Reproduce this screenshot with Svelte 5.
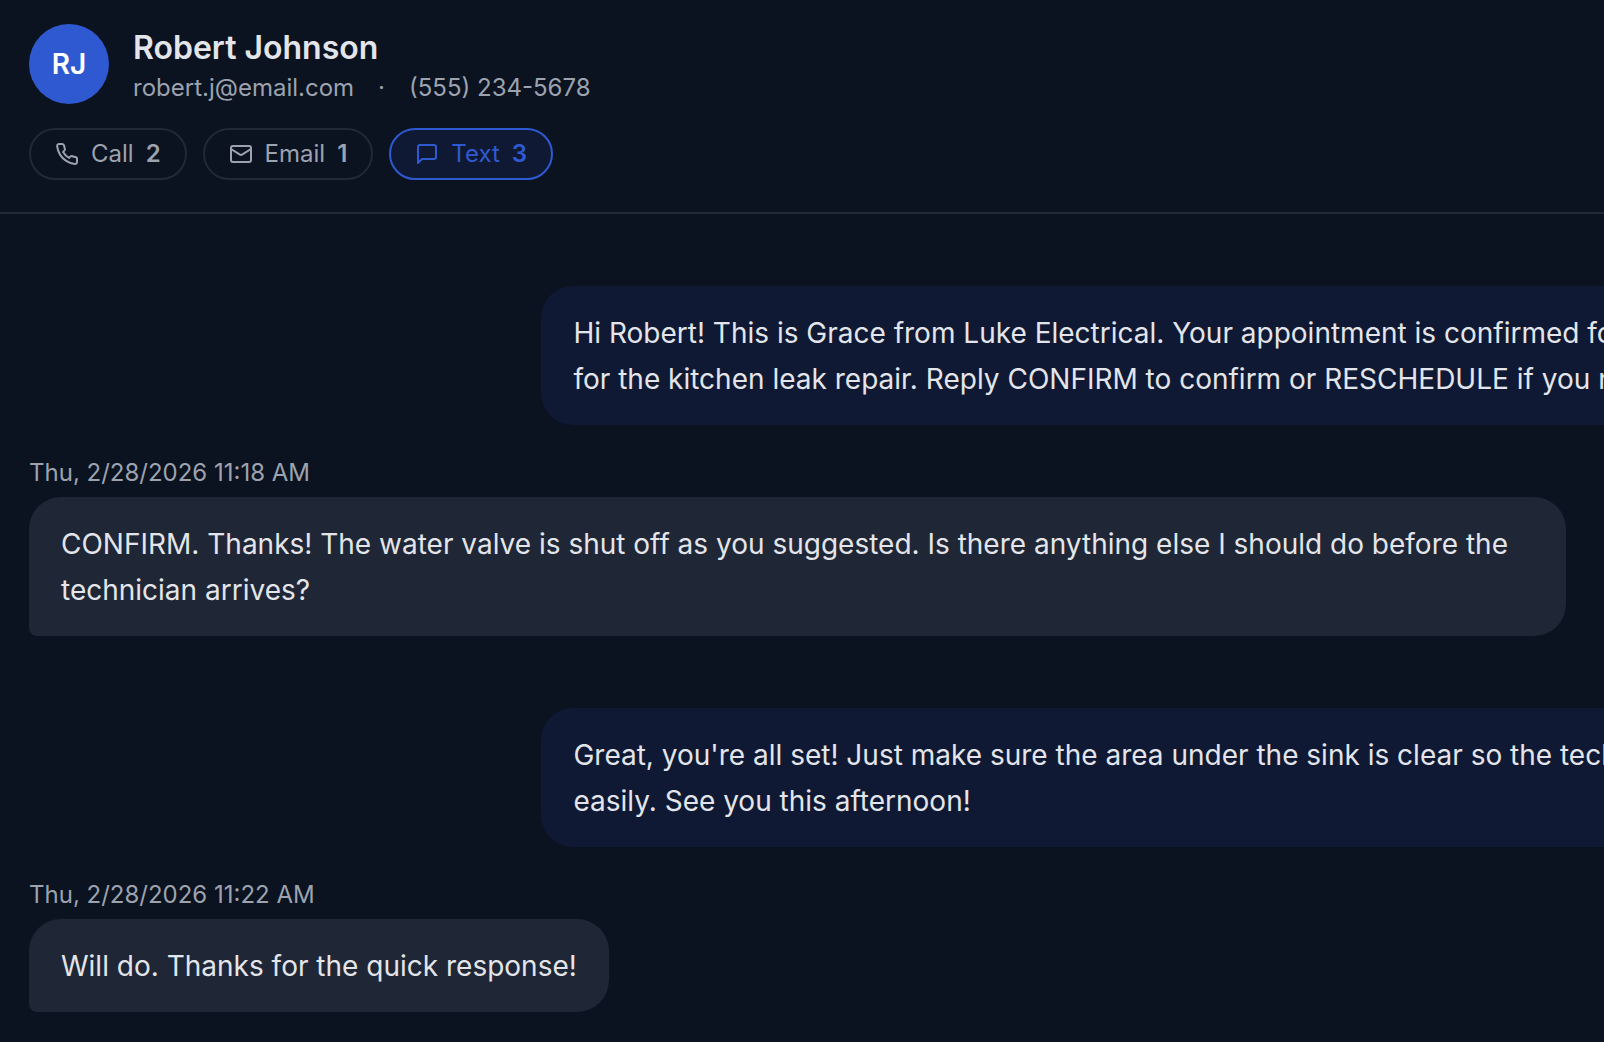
<script>
  const contact = {
    initials: "RJ",
    name: "Robert Johnson",
    email: "robert.j@email.com",
    phone: "(555) 234-5678",
  };

  const channels = [
    { id: "call", label: "Call", count: 2 },
    { id: "email", label: "Email", count: 1 },
    { id: "text", label: "Text", count: 3 },
  ];

  const messages = [
    {
      from: "us",
      body: "Hi Robert! This is Grace from Luke Electrical. Your appointment is confirmed for\nfor the kitchen leak repair. Reply CONFIRM to confirm or RESCHEDULE if you need",
    },
    {
      from: "customer",
      time: "Thu, 2/28/2026 11:18 AM",
      body: "CONFIRM. Thanks! The water valve is shut off as you suggested. Is there anything else I should do before the technician arrives?",
    },
    {
      from: "us",
      body: "Great, you're all set! Just make sure the area under the sink is clear so the tech\neasily. See you this afternoon!",
    },
    {
      from: "customer",
      time: "Thu, 2/28/2026 11:22 AM",
      body: "Will do. Thanks for the quick response!",
    },
  ];

  let active = $state("text");
</script>

<main class="conversation">
  <header class="header">
    <div class="contact">
      <div class="avatar">{contact.initials}</div>
      <div>
        <h1 class="name">{contact.name}</h1>
        <div class="details">
          <span>{contact.email}</span>
          <span>·</span>
          <span>{contact.phone}</span>
        </div>
      </div>
    </div>

    <nav class="channels">
      {#each channels as channel}
        <button
          type="button"
          class="pill"
          class:active={active === channel.id}
          aria-pressed={active === channel.id}
          onclick={() => (active = channel.id)}
        >
          <svg class="icon" viewBox="0 0 24 24" aria-hidden="true">
            {#if channel.id === "call"}
              <path d="M22 16.92v3a2 2 0 0 1-2.18 2 19.79 19.79 0 0 1-8.63-3.07 19.5 19.5 0 0 1-6-6 19.79 19.79 0 0 1-3.07-8.67A2 2 0 0 1 4.11 2h3a2 2 0 0 1 2 1.72 12.84 12.84 0 0 0 .7 2.81 2 2 0 0 1-.45 2.11L8.09 9.91a16 16 0 0 0 6 6l1.27-1.27a2 2 0 0 1 2.11-.45 12.84 12.84 0 0 0 2.81.7A2 2 0 0 1 22 16.92z" />
            {:else if channel.id === "email"}
              <rect x="2" y="4" width="20" height="16" rx="2" />
              <path d="m22 7-8.97 5.7a1.94 1.94 0 0 1-2.06 0L2 7" />
            {:else}
              <path d="M21 15a2 2 0 0 1-2 2H7l-4 4V5a2 2 0 0 1 2-2h14a2 2 0 0 1 2 2z" />
            {/if}
          </svg>
          <span>{channel.label}</span>
          <span class="count">{channel.count}</span>
        </button>
      {/each}
    </nav>
  </header>

  <!-- The thread runs wider than the window, so our own messages are cut at the right -->
  <section class="thread">
    {#each messages as message}
      <article class="message {message.from}">
        <div class="time">{message.time ?? ""}</div>
        <p class="bubble">{message.body}</p>
      </article>
    {/each}
  </section>
</main>

<style>
  :global(body) {
    background: #0b1220;
  }

  .conversation {
    min-height: 100vh;
    overflow: hidden;
    background: #0b1220;
    color: #e3e5ea;
    font-family: Inter, "Liberation Sans", sans-serif;
    font-size: 24px;
    line-height: 32px;
  }

  .header {
    display: flex;
    flex-direction: column;
    gap: 24px;
    padding: 24px 29px 32px;
    border-bottom: 2px solid #212838;
  }

  .contact {
    display: flex;
    align-items: center;
    gap: 24px;
  }

  .avatar {
    display: flex;
    align-items: center;
    justify-content: center;
    flex-shrink: 0;
    width: 80px;
    height: 80px;
    border-radius: 50%;
    background: #2f59d0;
    color: white;
    font-size: 28px;
    font-weight: 600;
  }

  .name {
    margin: 0;
    font-size: 32px;
    font-weight: 600;
    line-height: 48px;
  }

  .details {
    display: flex;
    gap: 24px;
    color: #9ca3af;
  }

  .channels {
    display: flex;
    gap: 16px;
  }

  .pill {
    display: flex;
    align-items: center;
    gap: 12px;
    padding: 8px 24px;
    border: 2px solid #212838;
    border-radius: 26px;
    background: transparent;
    color: #9ca3af;
    font: inherit;
    cursor: pointer;
  }

  .pill.active {
    border-color: #2f59d0;
    background: #0f1933;
    color: #2f59d0;
  }

  .icon {
    width: 24px;
    height: 24px;
    fill: none;
    stroke: currentColor;
    stroke-width: 2;
    stroke-linecap: round;
    stroke-linejoin: round;
  }

  .count {
    font-weight: 600;
  }

  .thread {
    box-sizing: border-box;
    display: flex;
    flex-direction: column;
    gap: 32px;
    width: 131.4%;
    padding: 32px 29px 24px;
  }

  .message {
    display: flex;
    flex-direction: column;
    align-items: flex-start;
    gap: 8px;
  }

  .time {
    min-height: 32px;
    color: #9ca3af;
  }

  .bubble {
    box-sizing: border-box;
    max-width: 75%;
    margin: 0;
    padding: 24px 32px 23px;
    border-radius: 32px;
    font-size: 28px;
    line-height: 46px;
  }

  .customer .bubble {
    border-bottom-left-radius: 8px;
    background: #1f2635;
  }

  .us {
    align-items: flex-end;
  }

  .us .bubble {
    width: 75%;
    border-bottom-right-radius: 8px;
    background: #0f1933;
    white-space: pre-line;
  }
</style>
